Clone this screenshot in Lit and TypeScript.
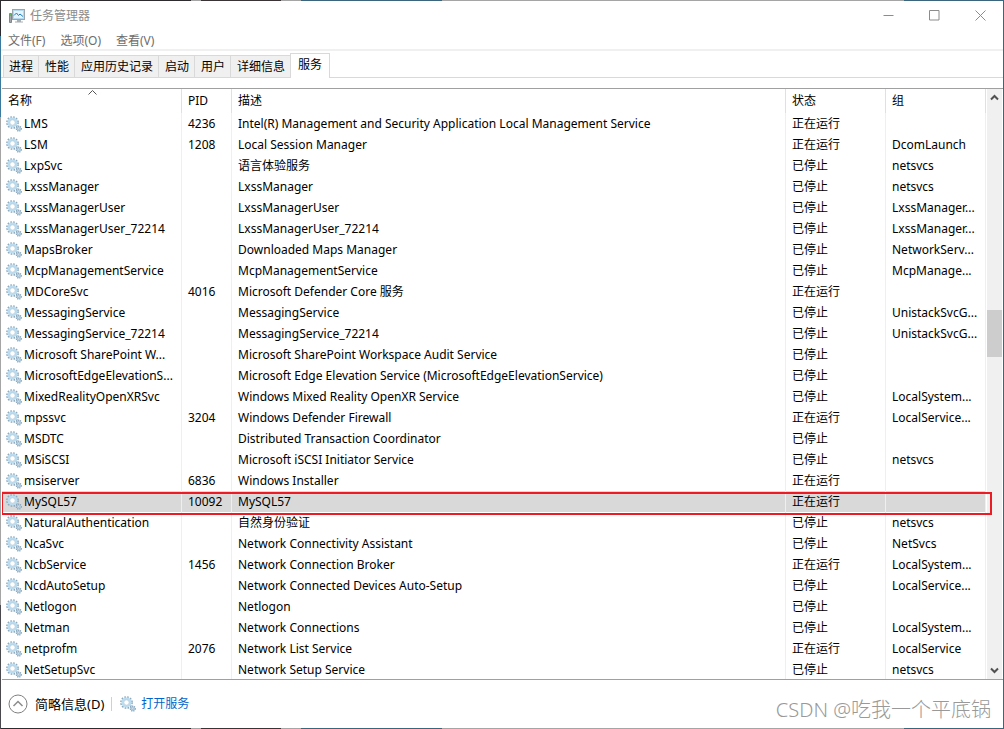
import { LitElement, html, css, svg } from "lit";
import { customElement, property, state } from "lit/decorators.js";

interface Service {
  name: string;
  pid?: string;
  desc: string;
  running?: boolean;
  group?: string;
}

const s = (name: string, desc: string, group = "", pid = "", running = pid !== ""): Service =>
  ({ name, desc, group, pid, running });

const SERVICES: Service[] = [
  s("LMS", "Intel(R) Management and Security Application Local Management Service", "", "4236"),
  s("LSM", "Local Session Manager", "DcomLaunch", "1208"),
  s("LxpSvc", "语言体验服务", "netsvcs"),
  s("LxssManager", "LxssManager", "netsvcs"),
  s("LxssManagerUser", "LxssManagerUser", "LxssManager..."),
  s("LxssManagerUser_72214", "LxssManagerUser_72214", "LxssManager..."),
  s("MapsBroker", "Downloaded Maps Manager", "NetworkServ..."),
  s("McpManagementService", "McpManagementService", "McpManage..."),
  s("MDCoreSvc", "Microsoft Defender Core 服务", "", "4016"),
  s("MessagingService", "MessagingService", "UnistackSvcG..."),
  s("MessagingService_72214", "MessagingService_72214", "UnistackSvcG..."),
  s("Microsoft SharePoint W...", "Microsoft SharePoint Workspace Audit Service"),
  s("MicrosoftEdgeElevationS...", "Microsoft Edge Elevation Service (MicrosoftEdgeElevationService)"),
  s("MixedRealityOpenXRSvc", "Windows Mixed Reality OpenXR Service", "LocalSystem..."),
  s("mpssvc", "Windows Defender Firewall", "LocalService...", "3204"),
  s("MSDTC", "Distributed Transaction Coordinator"),
  s("MSiSCSI", "Microsoft iSCSI Initiator Service", "netsvcs"),
  s("msiserver", "Windows Installer", "", "6836"),
  s("MySQL57", "MySQL57", "", "10092"),
  s("NaturalAuthentication", "自然身份验证", "netsvcs"),
  s("NcaSvc", "Network Connectivity Assistant", "NetSvcs"),
  s("NcbService", "Network Connection Broker", "LocalSystem...", "1456"),
  s("NcdAutoSetup", "Network Connected Devices Auto-Setup", "LocalService..."),
  s("Netlogon", "Netlogon"),
  s("Netman", "Network Connections", "LocalSystem..."),
  s("netprofm", "Network List Service", "LocalService", "2076"),
  s("NetSetupSvc", "Network Setup Service", "netsvcs"),
];

@customElement("gear-icon")
export class GearIcon extends LitElement {
  static styles = css`
    :host { display: block; flex: none; width: 16px; height: 16px; }
    svg { display: block; }
  `;
  render() {
    return html`<svg width="16" height="16" viewBox="0 0 16 16" aria-hidden="true">
      <circle cx="6.5" cy="6.5" r="5.6" fill="none" stroke="#8fa9bd" stroke-width="1.6" stroke-dasharray="1.7 1.232"/>
      <circle cx="6.5" cy="6.5" r="3.9" fill="#fff" stroke="#b9dcf0" stroke-width="2.1"/>
      <circle cx="6.5" cy="6.5" r="2.7" fill="#fff" stroke="#9bb8cc" stroke-width=".6"/>
      <circle cx="12.8" cy="12.6" r="2.4" fill="#b4d2e4" stroke="#7f9cb3" stroke-width="1.3" stroke-dasharray="1.1 .785"/>
      <circle cx="12.8" cy="12.6" r="1.9" fill="#b4d2e4"/>
      <circle cx="12.8" cy="12.6" r=".8" fill="#fff" stroke="#7f9cb3" stroke-width=".4"/>
    </svg>`;
  }
}

@customElement("service-table")
export class ServiceTable extends LitElement {
  @property({ attribute: false }) services: Service[] = [];
  @state() private selected = "MySQL57";

  static styles = css`
    :host { display: flex; min-height: 0; overflow: hidden; }
    .wrap { flex: 1; min-width: 0; }
    table { width: 100%; table-layout: fixed; border-collapse: separate; border-spacing: 0; }
    .c-name { width: 180px; }
    .c-pid { width: 50px; }
    .c-state, .c-group { width: 100px; }
    th, td {
      height: 21px; padding: 0 0 0 6px; box-sizing: border-box; text-align: left;
      font-weight: 400; line-height: 20px; white-space: nowrap; overflow: hidden;
      border-right: 1px solid #e5f1fb;
    }
    th { height: 24px; border-right-color: #e0e0e0; position: relative; }
    .first { padding-left: 4px; }
    th.first { padding-left: 6px; }
    .sort { position: absolute; left: 85px; top: 0; display: block; }
    .name { display: flex; align-items: center; gap: 2px; }
    tbody tr { position: relative; }
    .selected td { background: #d9d9d9; }
    .mark {
      position: absolute; z-index: 1; top: 1px; left: -1px; right: -6px; height: 23px;
      box-sizing: border-box; border: 2px solid #ed1c24; pointer-events: none;
    }
    .bar {
      flex: none; width: 15px; margin: 0 1px; background: #f0f0f0; display: flex;
      flex-direction: column;
    }
    .arrow {
      flex: none; width: 15px; height: 17px; padding: 0; border: 0; background: none;
      display: grid; place-items: center;
    }
    .track { flex: 1; display: grid; grid-template-rows: 204fr 47fr 305fr; }
    .thumb { grid-row: 2; background: #cdcdcd; }
  `;

  render() {
    return html`
      <div class="wrap">
        <table>
          <colgroup>
            <col class="c-name"><col class="c-pid"><col><col class="c-state"><col class="c-group">
          </colgroup>
          <thead>
            <tr>
              <th class="first" aria-sort="ascending">名称
                <svg class="sort" width="11" height="7" viewBox="0 0 11 7" aria-hidden="true"><path d="M1.5 5.5l4-4 4 4" fill="none" stroke="#555"/></svg>
              </th>
              <th>PID</th><th>描述</th><th>状态</th><th>组</th>
            </tr>
          </thead>
          <tbody>
            ${this.services.map((r) => html`
              <tr class=${r.name === this.selected ? "selected" : ""} @click=${() => (this.selected = r.name)}>
                <td class="first">
                  <div class="name"><gear-icon></gear-icon>${r.name}</div>
                  ${r.name === "MySQL57" ? html`<span class="mark"></span>` : ""}
                </td>
                <td>${r.pid}</td>
                <td>${r.desc}</td>
                <td>${r.running ? "正在运行" : "已停止"}</td>
                <td>${r.group}</td>
              </tr>`)}
          </tbody>
        </table>
      </div>
      <div class="bar">
        <button class="arrow" aria-label="向上滚动"><svg width="9" height="7" viewBox="0 0 9 7"><path d="M1 5.5l3.500-3.500 3.500 3.500" fill="none" stroke="#505050" stroke-width="2"/></svg></button>
        <div class="track"><div class="thumb"></div></div>
        <button class="arrow" aria-label="向下滚动"><svg width="9" height="7" viewBox="0 0 9 7"><path d="M1 1.500l3.500 3.500 3.500-3.500" fill="none" stroke="#505050" stroke-width="2"/></svg></button>
      </div>`;
  }
}

@customElement("app-root")
export class AppRoot extends LitElement {
  @state() private tab = "服务";

  static styles = css`
    :host {
      display: block; height: 100vh; box-sizing: border-box; padding: 1px;
      background:
        linear-gradient(#2d2b2e 0 5%, #3b7a9c 5% 16%, #a5a5a5 16% 83%, #4a4a4e 83%) 0 0 / 1px 100% no-repeat,
        linear-gradient(#3b657c, #3b657c) 100% 0 / 1px 100% no-repeat,
        linear-gradient(90deg, #2d2b2e 0 19%, #a5a5a5 19% 20%, #3a3336 20% 28%, #a5a5a5 28% 30%, #3b657c 30% 44%, #a5a5a5 44% 90%, #3b657c 90%);
      font: 12px/20px "Noto Sans", "Noto Sans CJK SC", sans-serif; color: #000;
    }
    .window { position: relative; height: 100%; background: #fff; display: flex; flex-direction: column; }
    button { font: inherit; color: inherit; cursor: default; }
    .title { flex: none; height: 29px; display: flex; align-items: center; color: #8c8c8c; padding-left: 8px; gap: 4px; }
    h1 { flex: 1; margin: 0; font: inherit; }
    .controls { display: flex; }
    .ctl { width: 46px; height: 29px; border: 0; padding: 0; background: none; display: grid; place-items: center; }
    .menu { flex: none; height: 19px; display: flex; gap: 15px; padding-left: 7px; border-bottom: 2px solid #f0f0f0; }
    .menu button { border: 0; padding: 2px 0 0; background: none; color: #6d6d6d; height: 19px; line-height: 18px; }
    .tabs { flex: none; height: 27px; display: flex; align-items: flex-end; padding-left: 2px; border-bottom: 1px solid #d9d9d9; box-sizing: border-box; }
    .tab { height: 22px; padding: 0 5px 0 6px; line-height: 22px; border: 1px solid #d9d9d9; border-width: 1px 1px 0 0; background: #f0f0f0; white-space: nowrap; }
    .tab:first-child { border-left-width: 1px; padding-left: 5px; }
    .tab.on { height: 25px; margin-bottom: -1px; padding: 0 7px 2px; border-left-width: 1px; margin-left: -1px; background: #fff; }
    .list { flex: 1; margin: 10px 0 0 1px; border: 1px solid #a0a0a0; border-width: 1px 0; }
    .foot { flex: none; height: 48px; display: flex; align-items: center; padding-left: 7px; }
    .less { display: flex; align-items: center; gap: 7px; border: 0; padding: 0; background: none; font-size: 13px; }
    .sep { width: 1px; height: 14px; margin: 0 8px 0 7px; background: #d0d0d0; }
    a { display: flex; align-items: center; gap: 5px; color: #0066cc; text-decoration: none; }
    .credit { margin-left: auto; padding: 12px 12px 0 0; font-size: 20px; line-height: 24px; color: #999; font-weight: 300; }
  `;

  render() {
    const tabs = ["进程", "性能", "应用历史记录", "启动", "用户", "详细信息", "服务"];
    const glyph = (shape: unknown) => html`<svg width="11" height="11" viewBox="0 0 11 11" fill="none" stroke="#8c8c8c">${shape}</svg>`;
    return html`
      <div class="window">
        <header class="title">
          <svg width="17" height="16" viewBox="0 0 17 16" aria-hidden="true">
            <path d="M.5 5.500h2v9h-2z" fill="#a2a8ac" stroke="#7f878c"/><path d="M1.500 6v2" stroke="#5fb760"/>
            <rect x="3.500" y="1.500" width="12" height="10" fill="#e9f6ff" stroke="#9aa4ab"/>
            <rect x="4.500" y="2.500" width="10" height="8" fill="#e4f4fd" stroke="#b4d9ee"/>
            <path d="M5 7.500l2.500-2.500 2 2.500 1.500-1.500 3 2.500" fill="none" stroke="#1b7fc4"/>
            <path d="M8 12h4v1.500h2v1H6v-1h2z" fill="#a8b0b5"/>
          </svg>
          <h1>任务管理器</h1>
          <div class="controls">
            <button class="ctl" aria-label="最小化">${glyph(svg`<path d="M.5 5.500h10"/>`)}</button>
            <button class="ctl" aria-label="最大化">${glyph(svg`<path d="M.5.5h9.500v9.500H.5z"/>`)}</button>
            <button class="ctl" aria-label="关闭">${glyph(svg`<path d="M.5.5l10 10M10.500.5l-10 10"/>`)}</button>
          </div>
        </header>
        <nav class="menu"><button>文件(F)</button><button>选项(O)</button><button>查看(V)</button></nav>
        <div class="tabs" role="tablist">
          ${tabs.map((t) => html`<button role="tab" aria-selected=${t === this.tab} class="tab ${t === this.tab ? "on" : ""}" @click=${() => (this.tab = t)}>${t}</button>`)}
        </div>
        <service-table class="list" .services=${SERVICES}></service-table>
        <footer class="foot">
          <button class="less">
            <svg width="20" height="20" viewBox="0 0 20 20" fill="none" aria-hidden="true"><circle cx="10" cy="10" r="9" stroke="#808080"/><path d="M5.500 12l4.500-4.500 4.500 4.500" stroke="#8c8c8c" stroke-width="1.500"/></svg>
            简略信息(D)
          </button>
          <span class="sep"></span>
          <a href="#"><gear-icon></gear-icon>打开服务</a>
          <span class="credit">CSDN @吃我一个平底锅</span>
        </footer>
      </div>`;
  }
}
